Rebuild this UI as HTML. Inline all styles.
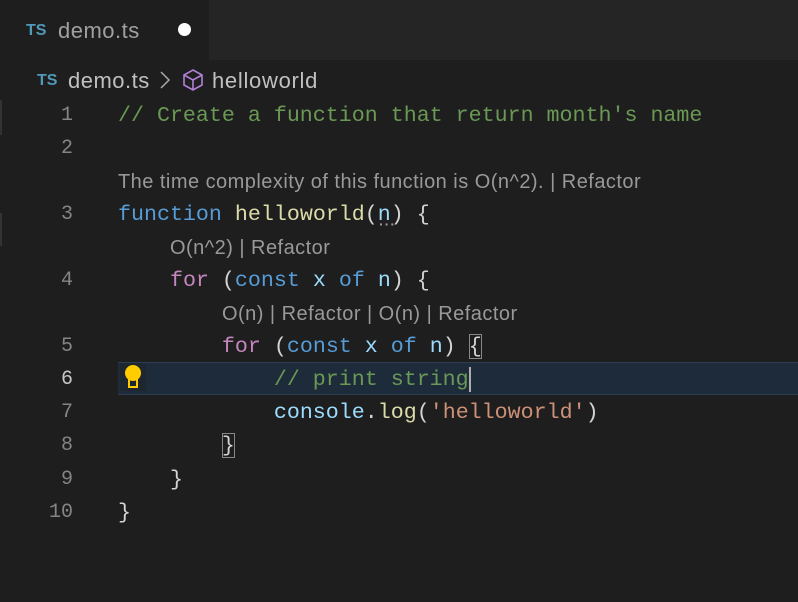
<!DOCTYPE html>
<html><head><style>
body{margin:0;width:798px;height:602px;background:#1e1e1e;overflow:hidden;position:relative;font-family:"Liberation Sans",sans-serif}
.tabbar{position:absolute;left:0;top:0;width:798px;height:60px;background:#252526}
.tab{position:absolute;left:0;top:0;width:209px;height:60px;background:#1e1e1e}
.ts{color:#519aba;font-weight:bold;font-size:16px;position:absolute}
.a{position:absolute;white-space:pre}
.code{font-family:"Liberation Mono",monospace;font-size:21.65px;line-height:33px;height:33px;color:#d4d4d4}
.ln{position:absolute;width:73px;text-align:right;font-family:"Liberation Mono",monospace;font-size:20px;line-height:33px;color:#858585}
.lens{font-size:20px;letter-spacing:0.47px;color:#999;line-height:33px}
.c{color:#6a9955}.k{color:#569cd6}.p{color:#c586c0}.f{color:#dcdcaa}.v{color:#9cdcfe}.s{color:#ce9178}
</style></head><body>
<div class="tabbar"><div class="tab"></div></div>
<span class="ts" style="left:26px;top:22px">TS</span>
<span class="a" style="left:58px;top:18px;font-size:22px;letter-spacing:0.5px;color:#a0a0a0">demo.ts</span>
<div style="position:absolute;left:178px;top:23px;width:13px;height:13px;border-radius:50%;background:#fff"></div>
<span class="ts" style="left:37px;top:72px">TS</span>
<span class="a" style="left:68px;top:68px;font-size:22px;letter-spacing:0.5px;color:#c0c0c0">demo.ts</span>
<svg style="position:absolute;left:158px;top:70px" width="14" height="20"><path d="M3 2l8 8-8 8" stroke="#aaa" stroke-width="1.5" fill="none"/></svg>
<svg style="position:absolute;left:181px;top:68px" width="24" height="24" viewBox="0 0 24 24"><path d="M12 2l9 5v10l-9 5-9-5V7z M3 7l9 5 9-5 M12 12v10" stroke="#b180d7" stroke-width="1.6" fill="none"/></svg>
<span class="a" style="left:212px;top:68px;font-size:22px;letter-spacing:0.7px;color:#c0c0c0">helloworld</span>
<div style="position:absolute;left:0;top:100px;width:2px;height:35px;background:#333"></div>
<div style="position:absolute;left:0;top:213px;width:2px;height:33px;background:#333"></div>
<div style="position:absolute;left:118px;top:362px;width:680px;height:31px;background:#1d2b3a;border-top:1px solid #2b3d4f;border-bottom:1px solid #2b3d4f"></div>
<div style="position:absolute;left:120px;top:363px;width:26px;height:28px;background:#1e2730"></div>
<svg style="position:absolute;left:123px;top:364px" width="22" height="26" viewBox="0 0 22 26"><circle cx="10" cy="9" r="8" fill="#ffcc00"/><rect x="6" y="14" width="8" height="9" fill="none" stroke="#ffcc00" stroke-width="2"/></svg>
<div class="ln" style="top:99px">1</div>
<div class="ln" style="top:132px">2</div>
<div class="ln" style="top:198px">3</div>
<div class="ln" style="top:264px">4</div>
<div class="ln" style="top:330px">5</div>
<div class="ln" style="top:363px;color:#c6c6c6">6</div>
<div class="ln" style="top:396px">7</div>
<div class="ln" style="top:429px">8</div>
<div class="ln" style="top:463px">9</div>
<div class="ln" style="top:496px">10</div>
<div class="a code" style="left:118px;top:99px"><span class="c">// Create a function that return month's name</span></div>
<div class="a lens" style="left:118px;top:166px">The time complexity of this function is O(n^2). | Refactor</div>
<div class="a code" style="left:118px;top:198px"><span class="k">function</span> <span class="f">helloworld</span>(<span class="v">n</span>) {</div>
<div class="a" style="left:379px;top:216px;color:#999;font-size:14px;letter-spacing:1px;font-weight:bold">···</div>
<div class="a lens" style="left:170px;top:232px">O(n^2) | Refactor</div>
<div class="a code" style="left:118px;top:264px">    <span class="p">for</span> (<span class="k">const</span> <span class="v">x</span> <span class="k">of</span> <span class="v">n</span>) {</div>
<div class="a lens" style="left:222px;top:298px">O(n) | Refactor | O(n) | Refactor</div>
<div class="a code" style="left:118px;top:330px">        <span class="p">for</span> (<span class="k">const</span> <span class="v">x</span> <span class="k">of</span> <span class="v">n</span>) <span style="outline:1px solid #888;outline-offset:-1px">{</span></div>
<div class="a code" style="left:118px;top:363px">            <span class="c">// print string</span><span style="border-left:2px solid #aeafad"></span></div>
<div class="a code" style="left:118px;top:396px">            <span class="v">console</span>.<span class="f">log</span>(<span class="s">'helloworld'</span>)</div>
<div class="a code" style="left:118px;top:429px">        <span style="outline:1px solid #888;outline-offset:-1px">}</span></div>
<div class="a code" style="left:118px;top:463px">    }</div>
<div class="a code" style="left:118px;top:496px">}</div>
</body></html>
